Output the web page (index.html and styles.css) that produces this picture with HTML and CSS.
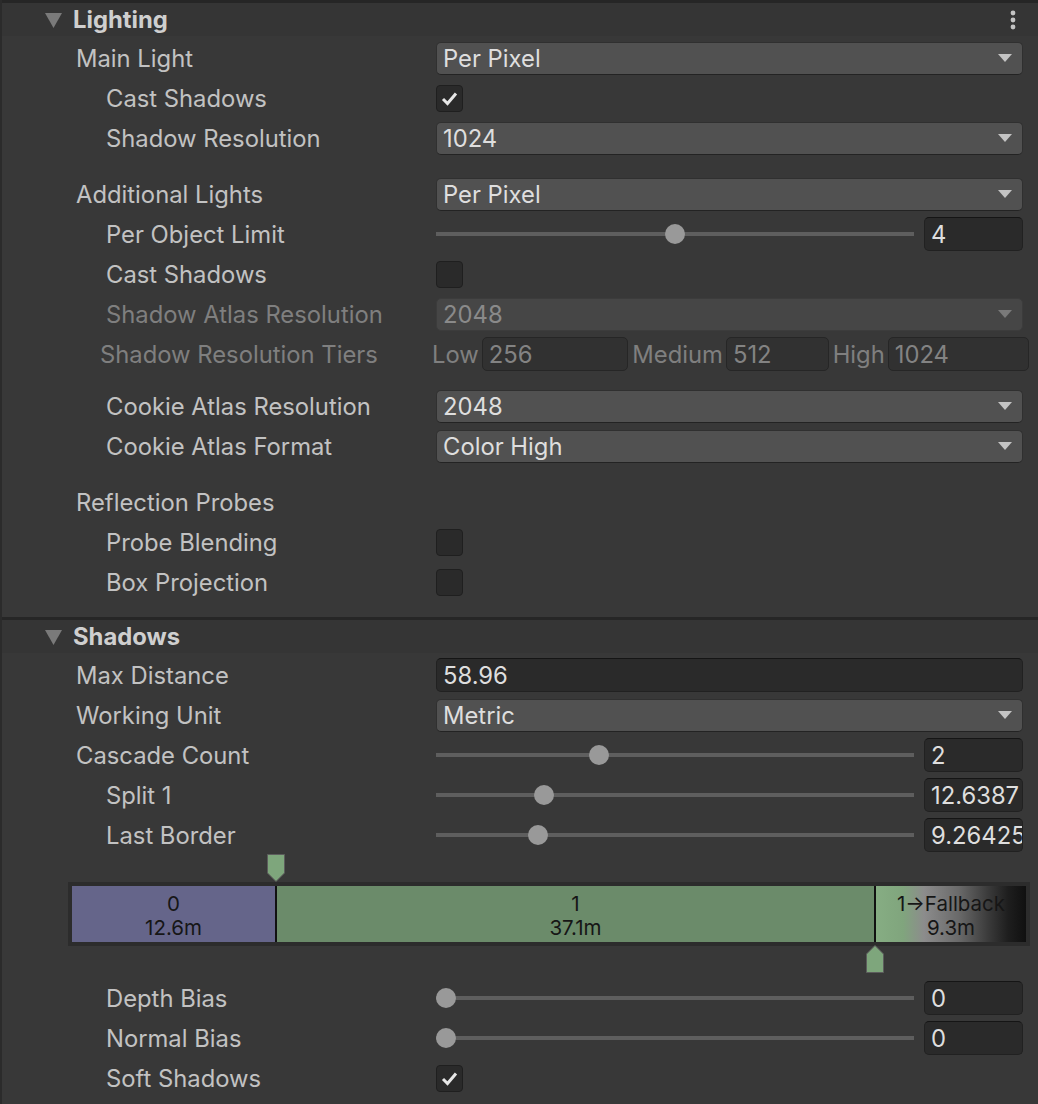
FILE: index.html
```html
<!DOCTYPE html>
<html lang="en">
<head>
	<meta charset="UTF-8">
	<title>Lighting / Shadows</title>
	<link rel="stylesheet" href="styles.css">
</head>
<body>
	<div class="inspector">
		<!-- Lighting -->
		<section class="section">
			<div class="section-head">
				<svg class="foldout" width="17" height="15" viewBox="0 0 17 15"><polygon points="0,0 17,0 8.5,15" fill="#7a7a7a"/></svg>
				<span class="section-title">Lighting</span>
				<svg class="menu" width="6" height="20" viewBox="0 0 6 20"><circle cx="3" cy="3" r="2.4" fill="#c4c4c4"/><circle cx="3" cy="10" r="2.4" fill="#c4c4c4"/><circle cx="3" cy="17" r="2.4" fill="#c4c4c4"/></svg>
			</div>
			<div class="rows">
				<div class="row">
					<span class="label">Main Light</span>
					<div class="dropdown">Per Pixel</div>
				</div>
				<div class="row">
					<span class="label sub">Cast Shadows</span>
					<div class="toggle checked"><svg width="27" height="27" viewBox="0 0 27 27"><polyline points="7,14 11.5,18.5 20,8.5" fill="none" stroke="#e6e6e6" stroke-width="3"/></svg></div>
				</div>
				<div class="row">
					<span class="label sub">Shadow Resolution</span>
					<div class="dropdown">1024</div>
				</div>

				<div class="row space-lg">
					<span class="label">Additional Lights</span>
					<div class="dropdown">Per Pixel</div>
				</div>
				<div class="row">
					<span class="label sub">Per Object Limit</span>
					<div class="slider">
						<div class="track"><span class="thumb" style="--v:0.5"></span></div>
						<div class="field num">4</div>
					</div>
				</div>
				<div class="row">
					<span class="label sub">Cast Shadows</span>
					<div class="toggle"></div>
				</div>
				<div class="row disabled">
					<span class="label sub">Shadow Atlas Resolution</span>
					<div class="dropdown">2048</div>
				</div>
				<div class="row disabled tiers-row">
					<span class="label tiers-label">Shadow Resolution Tiers</span>
					<div class="tiers">
						<div class="tier"><span>Low</span><div class="field">256</div></div>
						<div class="tier"><span>Medium</span><div class="field">512</div></div>
						<div class="tier"><span>High</span><div class="field">1024</div></div>
					</div>
				</div>

				<div class="row space-md">
					<span class="label sub">Cookie Atlas Resolution</span>
					<div class="dropdown">2048</div>
				</div>
				<div class="row">
					<span class="label sub">Cookie Atlas Format</span>
					<div class="dropdown">Color High</div>
				</div>

				<div class="row space-lg">
					<span class="label">Reflection Probes</span>
				</div>
				<div class="row">
					<span class="label sub">Probe Blending</span>
					<div class="toggle"></div>
				</div>
				<div class="row">
					<span class="label sub">Box Projection</span>
					<div class="toggle"></div>
				</div>
			</div>
		</section>

		<!-- Shadows -->
		<section class="section">
			<div class="section-head">
				<svg class="foldout" width="17" height="15" viewBox="0 0 17 15"><polygon points="0,0 17,0 8.5,15" fill="#7a7a7a"/></svg>
				<span class="section-title">Shadows</span>
			</div>
			<div class="rows">
				<div class="row">
					<span class="label">Max Distance</span>
					<div class="field wide">58.96</div>
				</div>
				<div class="row">
					<span class="label">Working Unit</span>
					<div class="dropdown">Metric</div>
				</div>
				<div class="row">
					<span class="label">Cascade Count</span>
					<div class="slider">
						<div class="track"><span class="thumb" style="--v:0.3333"></span></div>
						<div class="field num">2</div>
					</div>
				</div>
				<div class="row">
					<span class="label sub">Split 1</span>
					<div class="slider">
						<div class="track"><span class="thumb" style="--v:0.2135"></span></div>
						<div class="field num">12.6387</div>
					</div>
				</div>
				<div class="row">
					<span class="label sub">Last Border</span>
					<div class="slider">
						<div class="track"><span class="thumb" style="--v:0.2"></span></div>
						<div class="field num">9.26425</div>
					</div>
				</div>

				<div class="cascade">
					<svg class="marker marker-top" width="18" height="28" viewBox="0 0 18 28"><polygon points="0.5,0.5 17.5,0.5 17.5,19 9,27.5 0.5,19" fill="#7ea67c" stroke="#5c5c5c"/></svg>
					<div class="cascade-bar">
						<div class="split split-0" style="flex-basis:205px"><span>0</span><span>12.6m</span></div>
						<div class="split split-1" style="flex-basis:599px"><span>1</span><span>37.1m</span></div>
						<div class="split split-fallback"><span>1→Fallback</span><span>9.3m</span></div>
					</div>
					<svg class="marker marker-bottom" width="18" height="28" viewBox="0 0 18 28"><polygon points="9,0.5 17.5,9 17.5,27.5 0.5,27.5 0.5,9" fill="#7ea67c" stroke="#5c5c5c"/></svg>
				</div>

				<div class="row">
					<span class="label sub">Depth Bias</span>
					<div class="slider">
						<div class="track"><span class="thumb" style="--v:0"></span></div>
						<div class="field num">0</div>
					</div>
				</div>
				<div class="row">
					<span class="label sub">Normal Bias</span>
					<div class="slider">
						<div class="track"><span class="thumb" style="--v:0"></span></div>
						<div class="field num">0</div>
					</div>
				</div>
				<div class="row">
					<span class="label sub">Soft Shadows</span>
					<div class="toggle checked"><svg width="27" height="27" viewBox="0 0 27 27"><polyline points="7,14 11.5,18.5 20,8.5" fill="none" stroke="#e6e6e6" stroke-width="3"/></svg></div>
				</div>
			</div>
		</section>
	</div>
</body>
</html>
```

FILE: styles.css
```css
*{
	padding: 0;
	margin: 0;
	box-sizing: border-box;
}
html,body{
	background: #383838;
	height: 100%;
}
body{
	font-family: Inter, "Noto Sans", sans-serif;
	font-size: 23.8px;
	color: #c2c2c2;
	overflow: hidden;
}
.inspector{
	border-left: 2px solid #2b2b2b;
	min-height: 100%;
}

/* section header */
.section + .section{
	margin-top: 15px;
}
.section-head{
	height: 36px;
	border-top: 3px solid #262626;
	background: #353535;
	display: flex;
	align-items: center;
	padding: 0 22px 0 43px;
}
.foldout{
	margin-right: 11px;
	margin-top: 1px;
}
.section-title{
	font-weight: 700;
	color: #cfcfcf;
	flex: 1;
}
.rows{
	padding-top: 2px;
}

/* property rows */
.row{
	height: 40px;
	display: flex;
	align-items: center;
	padding-right: 15px;
}
.row.space-lg{
	margin-top: 16px;
}
.row.space-md{
	margin-top: 12px;
}
.label{
	width: 434px;
	flex: none;
	padding-left: 74px;
	white-space: nowrap;
}
.label.sub{
	padding-left: 104px;
}
.disabled{
	color: #7f7f7f;
}

/* dropdown */
.dropdown{
	flex: 1;
	height: 33px;
	background: #515151;
	border: 1px solid #303030;
	border-bottom-color: #232323;
	border-radius: 5px;
	display: flex;
	align-items: center;
	justify-content: space-between;
	padding: 0 10px 0 6px;
	color: #dedede;
}
.dropdown::after{
	content: "";
	border-left: 7.5px solid transparent;
	border-right: 7.5px solid transparent;
	border-top: 8px solid #c4c4c4;
}
.disabled .dropdown{
	background: #464646;
	border-color: #3c3c3c;
	color: #8a8a8a;
}
.disabled .dropdown::after{
	border-top-color: #7a7a7a;
}

/* text / number field */
.field{
	height: 34px;
	background: #2a2a2a;
	border: 1px solid #212121;
	border-top-color: #151515;
	border-radius: 5px;
	display: flex;
	align-items: center;
	padding-left: 6px;
	color: #dedede;
	white-space: nowrap;
	overflow: hidden;
}
.field.wide{
	flex: 1;
}
.disabled .field{
	color: #838383;
	background: #313131;
	border-color: #262626;
}

/* toggle */
.toggle{
	width: 27px;
	height: 27px;
	background: #2a2a2a;
	border: 1px solid #1f1f1f;
	border-radius: 4px;
}
.toggle svg{
	display: block;
	margin: -1px;
}

/* slider */
.slider{
	flex: 1;
	display: flex;
	align-items: center;
	gap: 10px;
}
.track{
	flex: 1;
	height: 20px;
	position: relative;
	background: linear-gradient(#5e5e5e, #5e5e5e) center / 100% 4px no-repeat;
}
.thumb{
	position: absolute;
	top: 0;
	left: calc((100% - 20px) * var(--v));
	width: 20px;
	height: 20px;
	border-radius: 50%;
	background: #999;
}
.field.num{
	width: 99px;
	flex: none;
}

/* shadow resolution tiers */
.tiers-row{
	padding-right: 9px;
}
.tiers-label{
	width: 430px;
	padding-left: 98px;
}
.tiers{
	flex: 1;
	display: flex;
	gap: 4px;
}
.tier{
	flex: 1;
	display: flex;
	align-items: center;
	gap: 3px;
}
.tier .field{
	flex: 1;
}

/* cascade split bar */
.cascade{
	position: relative;
	height: 123px;
	padding: 27px 8px 0 66px;
}
.cascade-bar{
	height: 64px;
	border: 4px solid #2c2c2c;
	display: flex;
	font-size: 20.5px;
	line-height: 24px;
	color: #161616;
}
.split{
	display: flex;
	flex-direction: column;
	align-items: center;
	justify-content: center;
	flex-shrink: 0;
	padding-top: 4px;
}
.split-0{
	background: #65658a;
	border-right: 2px solid #111;
}
.split-1{
	background: #6b8b6a;
	border-right: 2px solid #111;
}
.split-fallback{
	flex: 1;
	overflow: hidden;
	white-space: nowrap;
	background: linear-gradient(to right, #86ad83 0%, #80a57d 18%, #8c8c8c 32%, #6a6a6a 55%, #3a3a3a 75%, #1e1e1e 88%, #101010 100%);
}
.marker{
	position: absolute;
	display: block;
}
.marker-top{
	left: 265px;
	top: -1px;
}
.marker-bottom{
	left: 864px;
	top: 90px;
}
```
